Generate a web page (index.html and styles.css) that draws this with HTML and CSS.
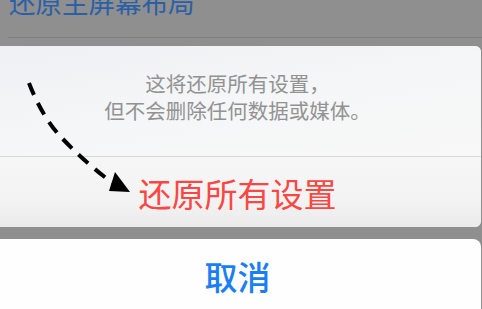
FILE: index.html
```html
<!DOCTYPE html>
<html lang="zh-CN">
<head>
<meta charset="utf-8">
<title>还原所有设置</title>
<link rel="stylesheet" href="styles.css">
</head>
<body>
<div class="screen">
  <div class="list-row">
    <div class="list-label">还原主屏幕布局</div>
  </div>
  <div class="sheet">
    <div class="sheet-group">
      <div class="sheet-message">
        <p class="msg-line">这将还原所有设置，</p>
        <p class="msg-line">但不会删除任何数据或媒体。</p>
      </div>
      <div class="sheet-action destructive">还原所有设置</div>
    </div>
    <div class="sheet-cancel">取消</div>
  </div>
  <svg class="arrow" width="482" height="309" viewBox="0 0 482 309" aria-hidden="true">
    <path d="M29 83 C 35 99, 46 121, 60 136 S 92 168, 114 184" fill="none" stroke="#000" stroke-width="4" stroke-dasharray="13 9"/>
    <polygon points="115,172 109,191 130,192" fill="#000"/>
  </svg>
</div>
</body>
</html>
```

FILE: styles.css
```css
* { box-sizing: border-box; }
html, body {
  margin: 0;
  padding: 0;
  width: 482px;
  height: 309px;
  overflow: hidden;
  background: #8f8f8f;
  font-family: "Noto Sans CJK SC", "Noto Sans", sans-serif;
}
.screen {
  position: relative;
  width: 482px;
  height: 309px;
  overflow: hidden;
}
.list-row {
  height: 38px;
  margin-left: 8px;
  border-bottom: 1px solid #7e7e7e;
  overflow: hidden;
}
.list-label {
  margin-top: -12px;
  margin-left: 1px;
  font-size: 26.5px;
  line-height: 28px;
  color: #2b5fa6;
  white-space: nowrap;
}
.sheet {
  margin-top: 8px;
  margin-left: -6px;
  margin-right: 1px;
  display: flex;
  flex-direction: column;
  gap: 12px;
}
.sheet-group {
  border-radius: 0 6px 6px 0;
  overflow: hidden;
  background: #f5f5f6;
}
.sheet-message {
  height: 111px;
  padding-top: 24px;
  background: linear-gradient(170deg, #eef0f3 0%, #f5f6f7 50%, #f8f8f8 100%);
  border-bottom: 1px solid #d8d8d8;
  text-align: center;
}
.msg-line {
  margin: 0;
  font-size: 20.5px;
  line-height: 26.5px;
  color: #929292;
}
.sheet-action {
  height: 70px;
  display: flex;
  align-items: center;
  justify-content: center;
  font-size: 33px;
  background: linear-gradient(180deg, #f6f6f6 0%, #f3f3f3 60%, #ebebeb 100%);
}
.destructive { color: #fa4743; padding-top: 2px; }
.sheet-cancel {
  height: 74px;
  border-radius: 0 8px 0 0;
  background: #fefefe;
  display: flex;
  align-items: center;
  justify-content: center;
  font-size: 33px;
  font-weight: 500;
  color: #1b7ef2;
}
.arrow {
  position: absolute;
  left: 0;
  top: 0;
  pointer-events: none;
}
```
